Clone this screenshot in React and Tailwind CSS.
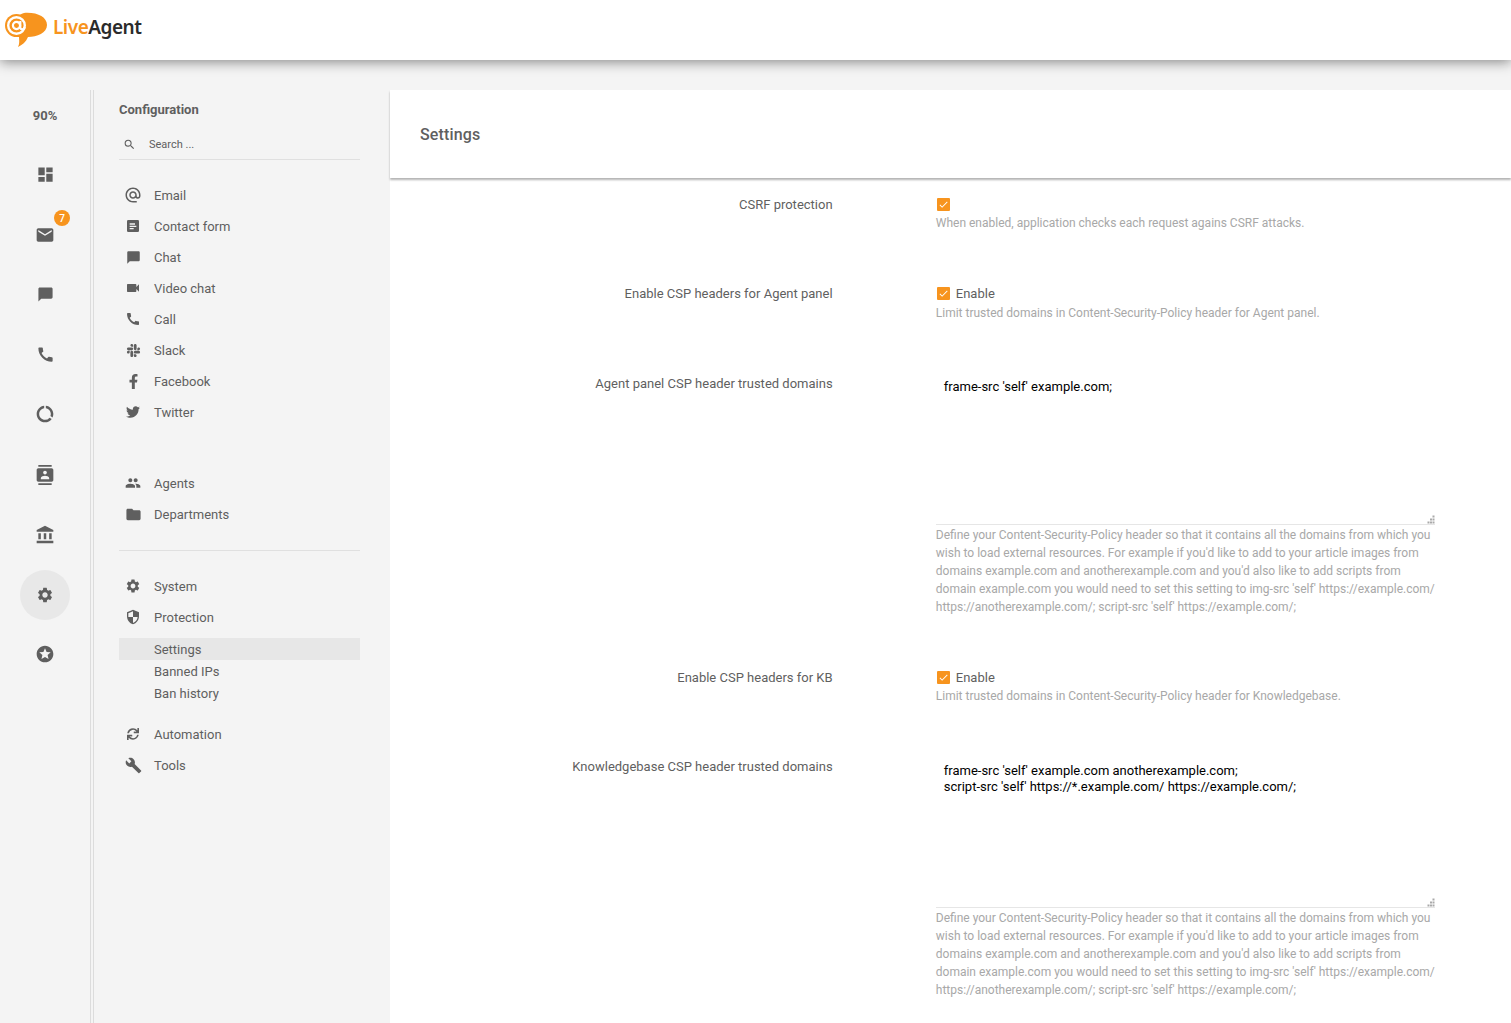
import React from 'react';
import {
  MdDashboard, MdEmail, MdChatBubble, MdCall, MdDataUsage, MdContacts, MdAccountBalance, MdSettings, MdStars,
  MdSearch, MdAlternateEmail, MdVideocam, MdPeople, MdFolder, MdSecurity, MdBuild, MdCheck,
} from 'react-icons/md';
import { FaSlack, FaFacebookF, FaTwitter, FaSync } from 'react-icons/fa';

const FormIcon = ({ size }) => (
  <svg width={size} height={size} viewBox="0 0 24 24">
    <rect x="3" y="3" width="18" height="18" rx="2" fill="currentColor" />
    <path d="M7 8h8v2H7zM7 11.5h10v2H7zM7 15h6v2H7z" fill="#f4f4f4" />
  </svg>
);

const railItems = [
  { icon: MdDashboard, size: 19, up: true },
  { icon: MdEmail, size: 20, badge: 7 },
  { icon: MdChatBubble, size: 17, up: true },
  { icon: MdCall, size: 19, up: true },
  { icon: MdDataUsage, size: 20, up: true },
  { icon: MdContacts, size: 20 },
  { icon: MdAccountBalance, size: 20 },
  { icon: MdSettings, size: 18, active: true },
  { icon: MdStars, size: 20, up: true },
];

const channels = [
  { label: 'Email', icon: MdAlternateEmail, size: 18 },
  { label: 'Contact form', icon: FormIcon },
  { label: 'Chat', icon: MdChatBubble, size: 15 },
  { label: 'Video chat', icon: MdVideocam },
  { label: 'Call', icon: MdCall },
  { label: 'Slack', icon: FaSlack, size: 15 },
  { label: 'Facebook', icon: FaFacebookF, size: 15 },
  { label: 'Twitter', icon: FaTwitter, size: 14 },
];

const cspHelp = "Define your Content-Security-Policy header so that it contains all the domains from which you wish to load external resources. For example if you'd like to add to your article images from domains example.com and anotherexample.com and you'd also like to add scripts from domain example.com you would need to set this setting to img-src 'self' https://example.com/ https://anotherexample.com/; script-src 'self' https://example.com/;";

const Logo = () => (
  <div className="flex items-center pl-[4px]">
    <svg width="44" height="36" viewBox="0 0 44 36" className="-mt-[1px]">
      <path d="M20 1C33 0 43 5 43 13C43 21 33 25 24 25C22 30 18 33 14 35C16 31 15 28 15 24C8 20 8 4 20 1Z" fill="#f7941e" />
      <circle cx="12.5" cy="13.5" r="11.5" fill="#f7941e" />
      <circle cx="12.5" cy="13.5" r="8.3" fill="none" stroke="#fff" strokeWidth="2.4" />
      <circle cx="12.5" cy="13.5" r="3.6" fill="none" stroke="#fff" strokeWidth="2.2" />
      <path d="M16.3 9V15.5C16.3 18 20 18 20.8 15" fill="none" stroke="#fff" strokeWidth="2.2" />
    </svg>
    <span className="-mt-[5px] ml-[5px] font-['Noto_Sans',sans-serif] text-[19px] font-semibold tracking-[-0.5px] text-[#f7941e]">
      Live<span className="text-[#2b2b2b]">Agent</span>
    </span>
  </div>
);

const NavItem = ({ icon: Icon, label, size = 16 }) => (
  <div className="flex h-[31px] items-center">
    <div className="-mt-[1px] flex w-[35px] justify-center pr-[7px]"><Icon size={size} /></div>
    <span>{label}</span>
  </div>
);

const SubItem = ({ label, active }) => (
  <div className={`flex h-[22px] items-center pl-[35px] pt-[2px] ${active ? 'bg-[#e7e7e7]' : ''}`}>{label}</div>
);

const Check = ({ label }) => (
  <div className="flex h-[16px] items-center gap-[5.5px] pl-[1.5px]">
    <span className="-mt-[1px] flex h-[13px] w-[13px] items-center justify-center rounded-[1px] bg-[#f7941e] text-white"><MdCheck size={11} /></span>
    {label && <span>{label}</span>}
  </div>
);

const Row = ({ label, className, children }) => (
  <div className={`flex ${className}`}>
    <div className="w-[442.6px] shrink-0 text-right leading-[16px]">{label}</div>
    <div className="ml-[103.2px] w-[500px]">{children}</div>
  </div>
);

const Help = ({ children }) => (
  <p className="text-[12px] leading-[18px] text-[#a8a8a8]">{children}</p>
);

const Area = ({ value, className }) => (
  <div className="relative w-[499px]">
    <textarea
      readOnly
      defaultValue={value}
      className={`block h-[149px] w-full resize-none border-b border-[#e6e6e6] bg-white px-[8px] text-[13px] leading-[16px] text-black outline-none ${className}`}
    />
    <svg width="8" height="9" viewBox="0 0 8 9" className="absolute bottom-[1px] right-[0px]" fill="#a9a9a9">
      <rect x="5.5" y="0.5" width="2" height="2" />
      <rect x="3" y="3.5" width="2" height="2" />
      <rect x="5.5" y="3.5" width="2" height="2" />
      <rect x="0.5" y="6.5" width="2" height="2" />
      <rect x="3" y="6.5" width="2" height="2" />
      <rect x="5.5" y="6.5" width="2" height="2" />
    </svg>
  </div>
);

export default function App() {
  return (
    <div className="h-[1023px] overflow-hidden bg-[#f4f4f4] font-['Roboto',sans-serif] text-[13px] text-[#5f5f5f]">
      <header className="relative z-10 flex h-[60px] items-center bg-white shadow-[0_2px_12px_rgba(0,0,0,0.45)]">
        <Logo />
      </header>

      <div className="flex h-[963px]">
        {/* icon rail */}
        <div className="w-[90px] shrink-0 pt-[25px]">
          <div className="flex h-[60px] items-center justify-center pt-[1px] text-[13px] font-bold">90%</div>
          {railItems.map((item, i) => (
            <div key={i} className="flex h-[60px] items-center justify-center">
              <div className={`relative flex h-[50px] w-[50px] items-center justify-center rounded-full ${item.active ? 'bg-[#e8e8e8]' : ''}`}>
                <item.icon size={item.size} className={item.up ? '-mt-[2px]' : ''} />
                {item.badge && (
                  <span className="absolute right-[0px] top-[0px] flex h-[16px] w-[16px] items-center justify-center rounded-full bg-[#f7941e] text-[10px] font-medium text-white">{item.badge}</span>
                )}
              </div>
            </div>
          ))}
        </div>

        <div className="mt-[30px] h-full w-[4px] shrink-0 border-x border-[#dcdcdc]" />

        {/* configuration menu */}
        <div className="mt-[30px] w-[296px] shrink-0 pl-[25px] pr-[30px]">
          <div className="pt-[12px] text-[13px] font-bold leading-[16px]">Configuration</div>
          <div className="mt-[13px] flex h-[29px] items-center border-b border-[#e0e0e0] pt-[1px] text-[11px]">
            <MdSearch size={13} className="-mt-[3px] ml-[4px]" />
            <span className="ml-[13px]">Search ...</span>
          </div>

          <div className="mt-[20px]">
            {channels.map((c) => <NavItem key={c.label} {...c} />)}
          </div>

          <div className="mt-[40px]">
            <NavItem icon={MdPeople} label="Agents" />
            <NavItem icon={MdFolder} size={17} label="Departments" />
          </div>

          <div className="mt-[20px] border-t border-[#e0e0e0]" />

          <div className="mt-[20px]">
            <NavItem icon={MdSettings} label="System" />
            <NavItem icon={MdSecurity} label="Protection" />
          </div>

          <div className="mt-[5px]">
            <SubItem label="Settings" active />
            <SubItem label="Banned IPs" />
            <SubItem label="Ban history" />
          </div>

          <div className="mt-[15px]">
            <NavItem icon={FaSync} size={12} label="Automation" />
            <NavItem icon={MdBuild} size={17} label="Tools" />
          </div>
        </div>

        {/* settings */}
        <main className="mt-[30px] min-w-0 flex-1 bg-white">
          <div className="relative flex h-[88px] items-center bg-white pl-[30px] pt-[2px] text-[16px] font-medium tracking-[0.01em] shadow-[0_2px_2px_rgba(0,0,0,0.3)]">
            Settings
          </div>

          <Row label="CSRF protection" className="pt-[18.5px]">
            <Check />
            <div className="mt-[1.5px]"><Help>When enabled, application checks each request agains CSRF attacks.</Help></div>
          </Row>

          <Row label="Enable CSP headers for Agent panel" className="pt-[54px]">
            <Check label="Enable" />
            <div className="mt-[2px]"><Help>Limit trusted domains in Content-Security-Policy header for Agent panel.</Help></div>
          </Row>

          <Row label="Agent panel CSP header trusted domains" className="pt-[54px]">
            <Area value="frame-src 'self' example.com;" className="pt-[3px]" />
            <div className="mt-[1px]"><Help>{cspHelp}</Help></div>
          </Row>

          <Row label="Enable CSP headers for KB" className="pt-[54px]">
            <Check label="Enable" />
            <div className="mt-[1px]"><Help>Limit trusted domains in Content-Security-Policy header for Knowledgebase.</Help></div>
          </Row>

          <Row label="Knowledgebase CSP header trusted domains" className="pt-[54px]">
            <Area value={"frame-src 'self' example.com anotherexample.com;\nscript-src 'self' https://*.example.com/ https://example.com/;"} className="pt-[4px]" />
            <div className="mt-[1px]"><Help>{cspHelp}</Help></div>
          </Row>
        </main>
      </div>
    </div>
  );
}
